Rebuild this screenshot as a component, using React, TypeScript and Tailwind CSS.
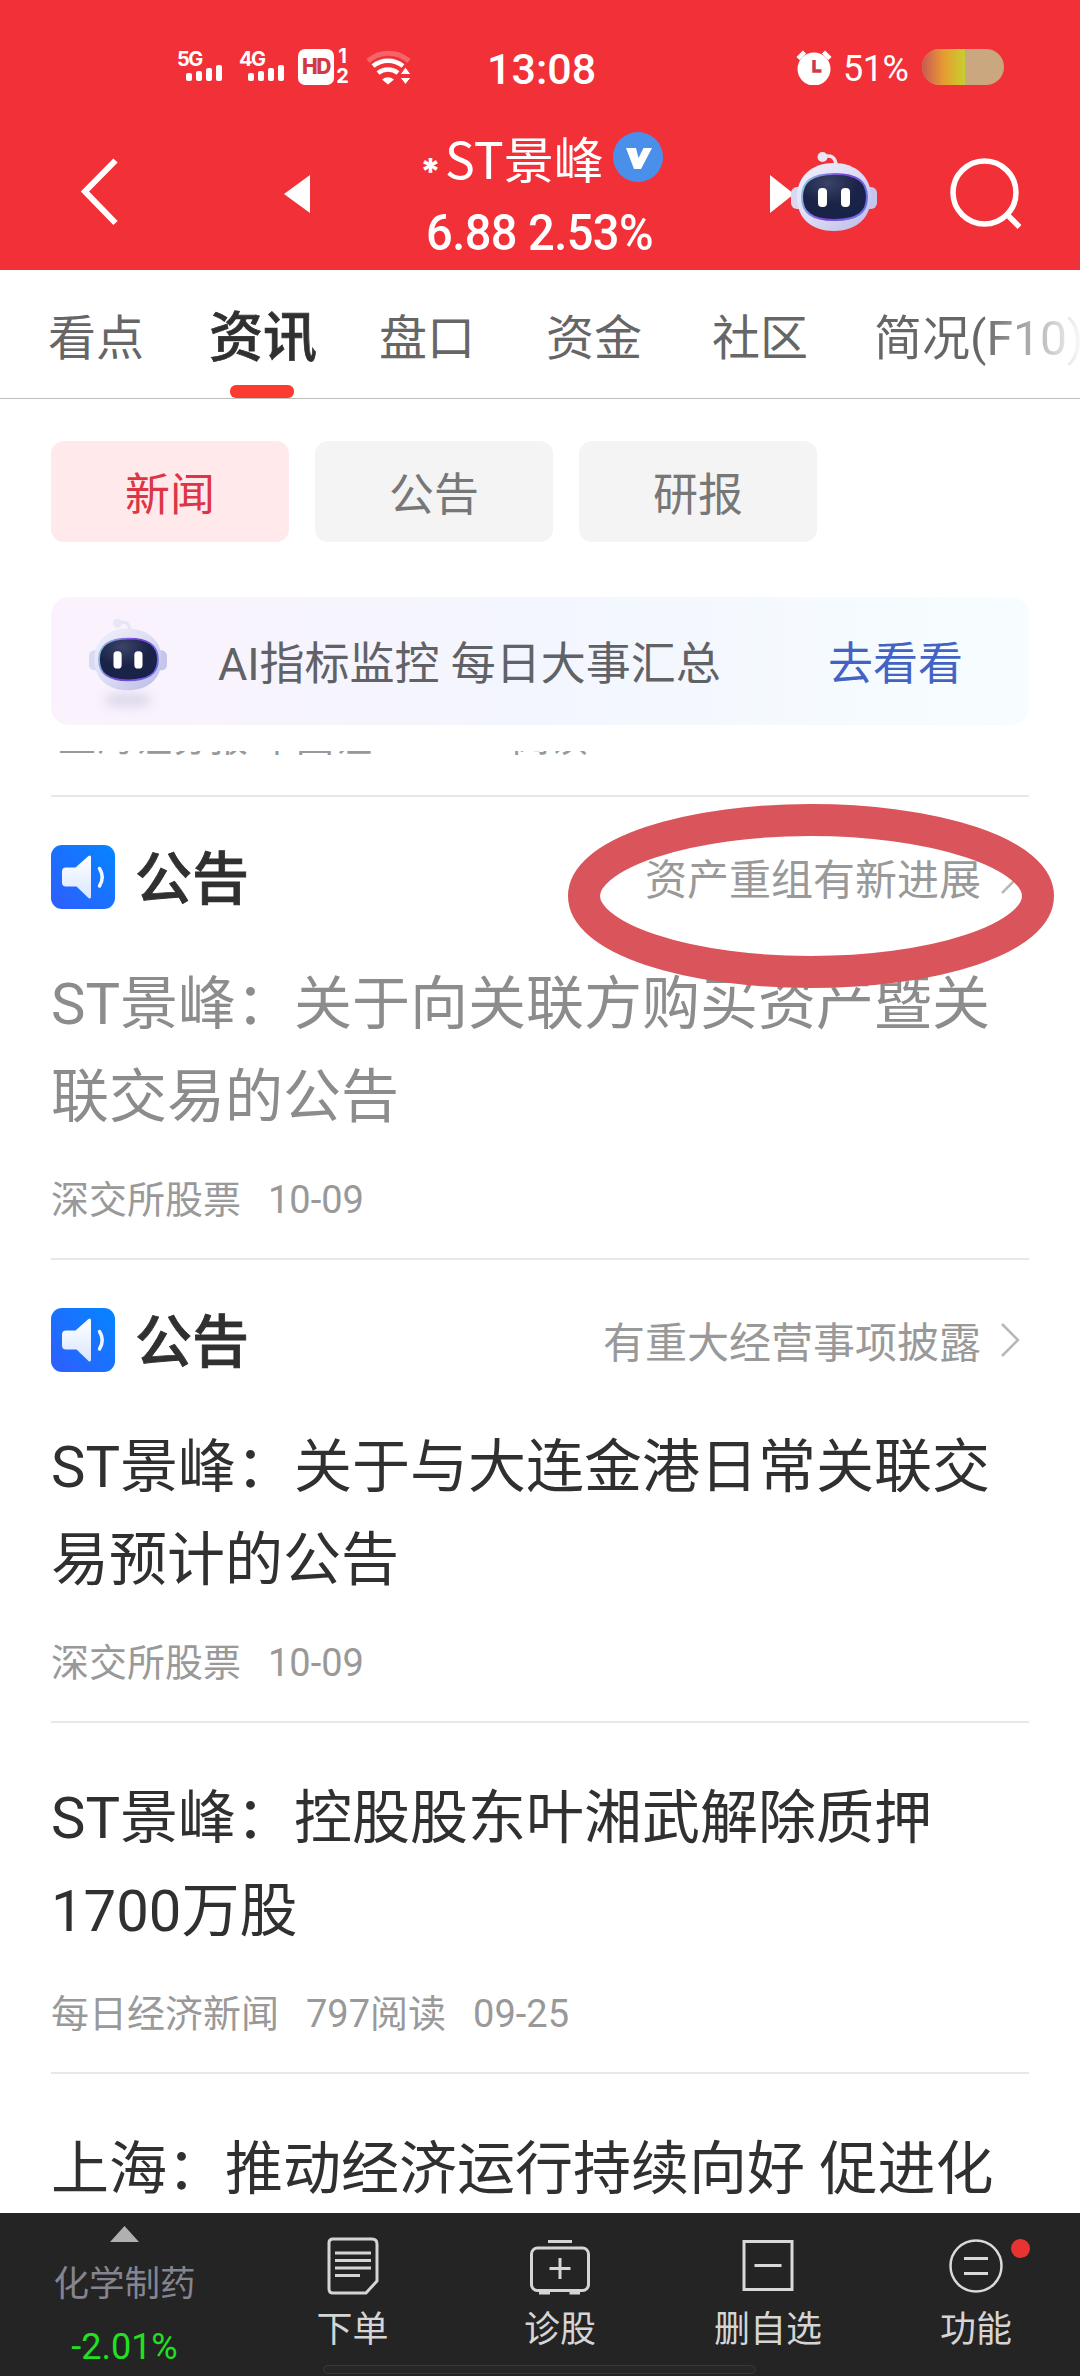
import clsx from 'clsx'

const tabs = [
  { label: '盘口', className: 'ml-[62px]' },
  { label: '资金', className: 'ml-[71px]' },
  { label: '社区', className: 'ml-[70px]' },
]

const chips = ['新闻', '公告', '研报']

const news = [
  {
    tag: '公告',
    hint: '资产重组有新进展',
    lines: ['ST景峰：关于向关联方购买资产暨关', '联交易的公告'],
    meta: ['深交所股票', '10-09'],
    read: true,
    circled: true,
  },
  {
    tag: '公告',
    hint: '有重大经营事项披露',
    lines: ['ST景峰：关于与大连金港日常关联交', '易预计的公告'],
    meta: ['深交所股票', '10-09'],
  },
  {
    lines: ['ST景峰：控股股东叶湘武解除质押', '1700万股'],
    meta: ['每日经济新闻', '797阅读', '09-25'],
  },
]

function Signal({ label }: { label: string }) {
  return (
    <div className="h-[36px] w-[46px]">
      <div className="h-[16px] font-[Inter] text-[20px] leading-[20px] font-bold tracking-[-1.5px]">
        {label}
      </div>
      <div className="ml-[9px] flex h-[16px] w-[36px] items-end justify-between">
        <span className="h-[8px] w-[6px] rounded-[2px] bg-white" />
        <span className="h-[10px] w-[6px] rounded-[2px] bg-white" />
        <span className="h-[13px] w-[6px] rounded-[2px] bg-white" />
        <span className="h-[16px] w-[6px] rounded-[2px] bg-white" />
      </div>
    </div>
  )
}

function StatusBar() {
  return (
    <div className="flex h-[102px] items-start pt-[49px] pl-[177px]">
      <Signal label="5G" />
      <div className="ml-[16px]">
        <Signal label="4G" />
      </div>
      <div className="ml-[13px] flex h-[36px] w-[36px] items-center justify-center rounded-[7px] bg-white font-[Inter] text-[21px] font-extrabold tracking-[-1.5px] text-[#d03a44]">
        HD
      </div>
      <div className="ml-[2px] w-[13px] text-center font-[Inter] text-[20px] leading-[19px] font-bold">
        <div className="-mt-[2px] h-[20px]">1</div>
        <div>2</div>
      </div>
      <svg className="mt-px ml-[17px] h-[35px] w-[46px]" viewBox="0 0 46 35" fill="none">
        <path d="M2 11 A31 31 0 0 1 43 11" stroke="#fff" strokeOpacity=".25" strokeWidth="5" />
        <path d="M7 16 A24 24 0 0 1 37 16" stroke="#fff" strokeWidth="4.5" />
        <path d="M12 23 A16 16 0 0 1 32 23" stroke="#fff" strokeWidth="4.5" />
        <path d="M16 29.500 Q22 25 28 29.500 L22 34.500 Z" fill="#fff" />
        <path d="M34 24.500 L39.500 17 L45 24.500 Z M34 27.500 L45 27.500 L39.500 34.500 Z" fill="#fff" stroke="#f23037" strokeWidth="1" />
      </svg>
      <div className="-mt-[5px] ml-[75px] w-[110px] text-[43px] leading-[50px] font-medium">13:08</div>
      <svg className="ml-[199px] h-[36px] w-[36px]" viewBox="0 0 36 36">
        <circle cx="18" cy="20" r="16.500" fill="#fff" />
        <path d="M2 9.500 L8.500 3 M34 9.500 L27.500 3" stroke="#fff" strokeWidth="4.500" />
        <path d="M18 11 V22 H25.500" stroke="#d03a44" strokeWidth="3.500" fill="none" />
      </svg>
      <div className="-mt-[2px] ml-[11px] w-[66px] text-[36px] leading-[44px] tracking-[-0.5px]">51%</div>
      <div className="ml-[13px] flex h-[36px] w-[82px] overflow-hidden rounded-full bg-[#cba780]">
        <div className="w-[43px] bg-gradient-to-r from-[#c9584f] via-[#e69a30] to-[#c4cf2f]" />
      </div>
    </div>
  )
}

function Robot({ className, id }: { className: string; id: string }) {
  return (
    <svg className={className} viewBox="0 0 86 80" fill="none">
      <defs>
        <linearGradient id={`${id}-shell`} x1="0" y1="0" x2="1" y2="1">
          <stop offset="0" stopColor="#f2f1fb" />
          <stop offset=".5" stopColor="#dcdcf5" />
          <stop offset="1" stopColor="#b9b8e6" />
        </linearGradient>
        <linearGradient id={`${id}-rim`} x1="0" y1="0" x2="1" y2=".3">
          <stop offset="0" stopColor="#8fd3e8" />
          <stop offset=".6" stopColor="#7a3fd8" />
          <stop offset="1" stopColor="#6f6be8" />
        </linearGradient>
        <radialGradient id={`${id}-face`} cx=".4" cy=".2" r=".9">
          <stop offset="0" stopColor="#3a4468" />
          <stop offset=".5" stopColor="#1b2447" />
          <stop offset="1" stopColor="#172048" />
        </radialGradient>
      </defs>
      <path d="M32 6 Q44 2 45 14" stroke="#e6e4f5" strokeWidth="3.500" />
      <circle cx="31.500" cy="6" r="5" fill="#e9e6f6" />
      <rect x="0" y="36" width="14" height="22" rx="6" fill="#dad9f3" />
      <rect x="72" y="36" width="14" height="22" rx="6" fill="#c6c5ee" />
      <path
        d="M43 12 C64 12 80 25 80 46 C80 68 64 80 43 80 C21 80 6 68 6 46 C6 25 21 12 43 12Z"
        fill={`url(#${id}-shell)`}
      />
      <path
        d="M43.500 23 C67 23 76 31 76 46 C76 61 67 69 43.500 69 C20 69 11 61 11 46 C11 31 20 23 43.500 23Z"
        fill={`url(#${id}-face)`}
        stroke={`url(#${id}-rim)`}
        strokeWidth="2"
      />
      <rect x="27" y="37" width="9" height="19" rx="4" fill="#fff" />
      <rect x="50" y="37" width="9" height="19" rx="4" fill="#fff" />
    </svg>
  )
}

function TitleBar() {
  return (
    <div className="flex h-[168px] items-start">
      <svg className="mt-[54px] ml-[78px] h-[72px] w-[44px]" viewBox="0 0 44 72" fill="none">
        <path d="M37.500 4.500 L7 35.500 L37.500 67" stroke="#fff" strokeWidth="6" />
      </svg>
      <svg className="mt-[73px] ml-[162px] h-[38px] w-[26px]" viewBox="0 0 26 38">
        <path d="M26 0 V38 L0 19Z" fill="#fff" />
      </svg>
      <div className="mt-[22px] ml-[110px] w-[245px]">
        <div className="flex h-[72px] items-center font-['Noto_Sans_CJK_SC'] text-[50px] leading-[72px]">
          <span className="mt-[22px] w-[25px] font-[Inter] text-[36px] leading-[44px] font-extrabold">*</span>
          <span className="-mt-[6px] w-[168px] whitespace-nowrap">ST景峰</span>
          <svg className="-mt-[7px] h-[50px] w-[50px] shrink-0" viewBox="0 0 50 50">
            <circle cx="25" cy="25" r="25" fill="#4a90ea" />
            <path d="M13 16 H23 L25.500 26 L30.500 16 H39 L28 37 H21Z" fill="#fff" />
          </svg>
        </div>
        <div className="mt-[9px] ml-[6px] origin-left scale-x-[0.94] text-[50px] leading-[56px] font-medium tracking-[-0.6px] whitespace-nowrap">
          6.88 2.53%
        </div>
      </div>
      <svg className="mt-[73px] ml-[105px] h-[38px] w-[24px]" viewBox="0 0 24 38">
        <path d="M0 0 V38 L24 19Z" fill="#fff" />
      </svg>
      <Robot id="head" className="mt-[49px] -ml-[3px] h-[80px] w-[86px]" />
      <svg className="mt-[55px] ml-[72px] h-[76px] w-[76px]" viewBox="0 0 76 76" fill="none">
        <circle cx="35.500" cy="35.500" r="31.500" stroke="#fff" strokeWidth="5.500" />
        <path d="M57 56.500 L70.500 70" stroke="#fff" strokeWidth="5.500" />
      </svg>
    </div>
  )
}

function Tabs() {
  return (
    <nav className="flex h-[129px] overflow-hidden border-b border-[#bfbfbf] text-[48px] leading-[137px] whitespace-nowrap text-[#666]">
      <span className="ml-[48px] w-[96px]">看点</span>
      <span className="relative ml-[65px] h-[128px] w-[108px] text-[54px] font-medium text-[#303030] [-webkit-text-stroke:0.7px]">
        资讯
        <span className="absolute bottom-0 left-[21px] h-[13px] w-[64px] rounded-[6px] bg-[#fb3a30]" />
      </span>
      {tabs.map((tab) => (
        <span key={tab.label} className={tab.className}>
          {tab.label}
        </span>
      ))}
      <span className="ml-[66px] bg-gradient-to-r from-[#666] from-50% to-white to-100% bg-clip-text text-transparent">
        简况(F10)
      </span>
    </nav>
  )
}

function SpeakerIcon() {
  return (
    <svg className="h-[64px] w-[64px]" viewBox="0 0 64 64" fill="none">
      <defs>
        <linearGradient id="speaker-bg" x1="0" y1="1" x2="1" y2="0">
          <stop offset="0" stopColor="#2f5dff" />
          <stop offset="1" stopColor="#0585ff" />
        </linearGradient>
        <linearGradient id="speaker-fg" x1="0" y1="0" x2="0" y2="1">
          <stop offset="0" stopColor="#fff" />
          <stop offset="1" stopColor="#d9e6ff" />
        </linearGradient>
      </defs>
      <rect width="64" height="64" rx="11" fill="url(#speaker-bg)" />
      <path
        d="M15 22.500 H24.500 L37.500 11 Q40 9.500 40 12.500 V51.500 Q40 54.500 37.500 53 L25.500 41.500 H15 Q11 41.500 11 37.500 V26.500 Q11 22.500 15 22.500Z"
        fill="url(#speaker-fg)"
      />
      <path d="M48.500 23.500 Q54 32 48.500 41" stroke="#f0f5ff" strokeWidth="3.500" strokeLinecap="round" />
    </svg>
  )
}

function NewsItem({ item }: { item: (typeof news)[number] }) {
  return (
    <article className="relative border-b-2 border-[#e8e8e8]">
      {item.tag && (
        <div className="flex h-[112px] items-end">
          <SpeakerIcon />
          <div className="ml-[20px] h-[66px] text-[57px] leading-[74px] font-medium text-[#303030] [-webkit-text-stroke:0.8px]">
            {item.tag}
          </div>
          <div className="mr-[6px] ml-auto h-[64px] text-[42px] leading-[72px] text-[#999]">{item.hint}</div>
          <svg className="mr-[8px] h-[64px] w-[34px]" viewBox="0 0 34 64" fill="none">
            <path d="M15 16 L31 32 L15 48" stroke="#b8b8b8" strokeWidth="2.500" />
          </svg>
        </div>
      )}
      <h2
        className={clsx(
          'pt-[49px] text-[58px] leading-[93px] whitespace-nowrap',
          item.read ? 'text-[#8c8c8c]' : 'text-[#303030]',
        )}
      >
        {item.lines.map((line) => (
          <div key={line}>{line}</div>
        ))}
      </h2>
      <div className="flex h-[114px] gap-[27px] pt-[29px] text-[38px] leading-[54px] text-[#999]">
        {item.meta.map((text) => (
          <span key={text}>{text}</span>
        ))}
      </div>
      {item.circled && (
        <svg className="absolute top-[7px] -right-[26px] h-[184px] w-[488px]" viewBox="0 0 488 184" fill="none">
          <ellipse cx="244" cy="92" rx="227" ry="76" stroke="#da555b" strokeWidth="32" />
        </svg>
      )}
    </article>
  )
}

function BottomBar() {
  return (
    <footer className="relative flex h-[163px] bg-[#242424] text-center text-[36px] leading-[46px] text-[#d5d5d5]">
      <div className="w-[249px] pt-[13px]">
        <svg className="mx-auto h-[16px] w-[29px]" viewBox="0 0 29 16">
          <path d="M0 16 L14.500 0 L29 16Z" fill="#b0b0b0" />
        </svg>
        <div className="mt-[19px] text-[35.5px] text-[#85858f]">化学制药</div>
        <div className="mt-[17px] text-[#22e022]">-2.01%</div>
      </div>
      <div className="w-[207px] pt-[22px]">
        <svg className="mx-auto h-[64px] w-[60px]" viewBox="0 0 60 64" fill="none" stroke="#d5d5d5" strokeWidth="3">
          <path d="M10 4 H49 Q54 4 54 9 V46 L43 58 H10 Q6 58 6 54 V8 Q6 4 10 4Z" />
          <path d="M12 18 H48 M12 25.500 H48 M12 33 H48 M12 40.500 H37" />
        </svg>
        <div className="mt-[8px]">下单</div>
      </div>
      <div className="w-[208px] pt-[22px]">
        <svg className="mx-auto h-[64px] w-[64px]" viewBox="0 0 64 64" fill="none" stroke="#d5d5d5" strokeWidth="3">
          <rect x="3.500" y="13" width="57" height="42.500" rx="6" />
          <path d="M20 6.500 H44 M32 23 V44 M21.500 33.500 H42.500" />
          <path d="M11 57.500 H22 M41.500 57.500 H52" strokeWidth="4" />
        </svg>
        <div className="mt-[8px]">诊股</div>
      </div>
      <div className="w-[208px] pt-[22px]">
        <svg className="mx-auto h-[64px] w-[64px]" viewBox="0 0 64 64" fill="none" stroke="#d9d9d9" strokeWidth="3">
          <rect x="8" y="6.500" width="48" height="48" />
          <path d="M18.500 30.500 H45.500" />
        </svg>
        <div className="mt-[8px]">删自选</div>
      </div>
      <div className="relative w-[208px] pt-[22px]">
        <svg className="mx-auto h-[64px] w-[64px]" viewBox="0 0 64 64" fill="none" stroke="#d9d9d9" strokeWidth="2.500">
          <circle cx="32" cy="31" r="25.500" />
          <path d="M20 23.500 H44 M20 38.500 H44" strokeWidth="3" />
        </svg>
        <div className="mt-[8px]">功能</div>
        <span className="absolute top-[26px] right-[50px] h-[19px] w-[19px] rounded-full bg-[#e83332]" />
      </div>
      <div className="absolute bottom-[2px] left-[323px] h-[9px] w-[433px] rounded-full border border-[#383838] bg-[#272727]" />
    </footer>
  )
}

export default function App() {
  return (
    <div className="flex h-[2376px] w-[1080px] flex-col overflow-hidden bg-white font-[Roboto,'Noto_Sans_CJK_SC',sans-serif]">
      <header className="h-[270px] shrink-0 bg-[#f23037] text-white">
        <StatusBar />
        <TitleBar />
      </header>
      <Tabs />

      <main className="h-[1814px] shrink-0 overflow-hidden px-[51px] pt-[42px]">
        <div className="flex gap-[26px]">
          {chips.map((chip, idx) => (
            <div
              key={chip}
              className={clsx(
                'h-[101px] w-[238px] rounded-[13px] text-center text-[45px] leading-[109px]',
                idx === 0 ? 'bg-[#ffe9ea] text-[#dc3545]' : 'bg-[#f4f4f4] text-[#777]',
              )}
            >
              {chip}
            </div>
          ))}
        </div>

        <div className="mt-[55px] flex h-[128px] items-center rounded-[18px] bg-gradient-to-r from-[#fbf2fd] via-[#f3f6fe] to-[#f7fdff] text-[45px] text-[#606266]">
          <div className="ml-[38px] h-[98px] w-[78px]">
            <Robot id="banner" className="mt-[4px] h-[76px] w-[78px]" />
            <div className="mx-auto mt-[3px] h-[10px] w-[44px] rounded-full bg-[#d4cfe4] blur-[6px]" />
          </div>
          <span className="mt-[8px] ml-[51px]">AI指标监控 每日大事汇总</span>
          <span className="mt-[8px] mr-[66px] ml-auto text-[#4263c4]">去看看</span>
        </div>

        {/* Tail of the row scrolled under the banner */}
        <div className="mt-[26px] flex h-[46px] items-start overflow-hidden border-b-2 border-[#e8e8e8] pl-[7px] text-[38px] leading-[54px] text-[#999]">
          <div className="-mt-[40px] flex gap-[33px]">
            <span>上海证券报·中国证</span>
            <span>17061阅读</span>
          </div>
        </div>

        {news.map((item) => (
          <NewsItem key={item.lines[0]} item={item} />
        ))}
        <h2 className="pt-[49px] text-[58px] leading-[93px] whitespace-nowrap text-[#303030]">
          上海：推动经济运行持续向好 促进化
        </h2>
      </main>

      <BottomBar />
    </div>
  )
}
